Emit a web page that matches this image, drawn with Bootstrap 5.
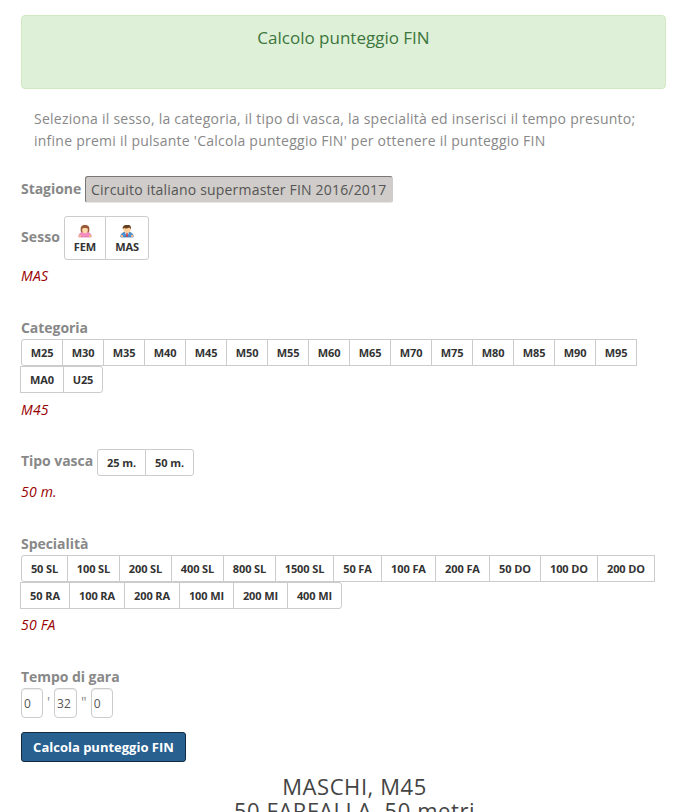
<!DOCTYPE html>
<html lang="it">
<head>
<meta charset="utf-8">
<meta name="viewport" content="width=device-width, initial-scale=1">
<title>Calcolo punteggio FIN</title>
<link href="https://cdn.jsdelivr.net/npm/bootstrap@5.3.0/dist/css/bootstrap.min.css" rel="stylesheet">
<style>
body{font-family:"Open Sans",sans-serif;font-size:14px;line-height:22px;color:#888;background:#fff;height:812px;overflow:hidden}
.page{width:645px;margin:15px 0 0 21px}
.title-box{height:74px;padding:10px 15px;background:#dff0d8;border:1px solid #d0e9c0;border-radius:4px;color:#3c763d;margin-bottom:19px;font-size:17px;line-height:23px}
.intro{padding:0 13px;height:44px;margin-bottom:24px;white-space:nowrap;letter-spacing:.248px}
.lbl{font-weight:700;line-height:22px;height:22px;white-space:nowrap;letter-spacing:-.05px}
.lbl-stagione{width:60px;margin-top:2px}
.lbl-sesso{width:39px;margin-top:10px;letter-spacing:.1px}
.lbl-vasca{width:72px;margin-top:1px}
.season{margin-left:4px;width:308px;height:27px;padding:0 5px;background:#d0ccc9;color:#555;border:1px solid;border-color:#777 #d0ccc9 #e8e5e3 #777;border-radius:3px;line-height:26px;white-space:nowrap;letter-spacing:.19px}
.group .btn{--bs-btn-color:#333;--bs-btn-border-color:#ccc;--bs-btn-bg:#fff;--bs-btn-hover-bg:#eee;--bs-btn-hover-border-color:#ccc;font-size:11px;font-weight:700;line-height:17px;letter-spacing:-.1px;padding:4px 0;height:27px;border-radius:0;margin-left:-1px;white-space:nowrap}
.group .btn:first-child{margin-left:0;border-radius:3px 0 0 3px}
.group .btn:last-child{border-radius:0 3px 3px 0}
.group.sex .btn{height:44px;padding-top:6px;line-height:16px}
.sex svg{display:block;margin:0 auto}
.group{margin-left:4px}
.wrapped{margin-left:0}
.w40{width:40px}.w42{width:42px}.w44{width:44px}.w47{width:47px}.w49{width:49px}.w50{width:50px}.w52{width:52px}.w53{width:53px}.w55{width:55px}.w56{width:56px}.w58{width:58px}.w59{width:59px}
.choice{color:#900;font-style:italic;height:22px;letter-spacing:.2px}
.time{width:22px;height:30px;border:1px solid #ccc;border-radius:4px;padding:0 2px;color:#555;font-size:12px;box-shadow:inset 0 1px 1px rgba(0,0,0,.075)}
.tick{padding:3px 4px 0}
.btn.go{--bs-btn-color:#fff;--bs-btn-bg:#286090;--bs-btn-border-color:#122b40;--bs-btn-hover-bg:#204d74;font-size:13px;font-weight:700;line-height:20px;padding:4px 0;width:165px;height:30px;border-radius:3px}
.result{font-size:22px;line-height:24px;letter-spacing:.57px;color:#444;margin:12px 0 0 22px}
</style>
<script src="https://cdn.jsdelivr.net/npm/bootstrap@5.3.0/dist/js/bootstrap.bundle.min.js"></script>
</head>
<body>
<main class="page">
<div class="title-box text-center">Calcolo punteggio FIN</div>
<p class="intro">Seleziona il sesso, la categoria, il tipo di vasca, la specialità ed inserisci il tempo presunto;<br>infine premi il pulsante 'Calcola punteggio FIN' per ottenere il punteggio FIN</p>

<div class="d-flex" style="margin-bottom:13px"><div class="lbl lbl-stagione">Stagione</div><div class="season">Circuito italiano supermaster FIN 2016/2017</div></div>

<div class="d-flex" style="margin-bottom:5px"><div class="lbl lbl-sesso">Sesso</div>
<div class="group sex d-flex">
<button class="btn w42" type="button"><svg width="14" height="16" viewBox="0 0 14 16"><path d="M3 9.500C2 4 3 2 7 2S12 4 11 9.500Z" fill="#9a5a35"/><path d="M.8 14C.8 10.500 3 9 7 9s6.200 1.500 6.200 5Z" fill="#f48cc0" stroke="#d5709f" stroke-width=".7"/><path d="M4.200 6C5 4.800 9 4.800 9.800 6c.2 3-.8 4.300-2.800 4.300S4 9 4.200 6Z" fill="#ffdcae"/><path d="M1 12h2v2H1zM11 12h2v2h-2z" fill="#f2b583"/></svg>FEM</button>
<button class="btn w44" type="button"><svg width="14" height="16" viewBox="0 0 14 16"><path d="M.8 14C.8 10.500 3 9 7 9s6.200 1.500 6.200 5Z" fill="#4c93d4" stroke="#3269a5" stroke-width=".7"/><path d="M5 9.500h4l-2 4z" fill="#fff"/><path d="M6.400 10h1.200L8 13.500H6z" fill="#c33"/><ellipse cx="7" cy="6.300" rx="3.500" ry="3.800" fill="#ffd09b"/><path d="M3 6.500C2 3 4 1.500 8 2c3 0 3 2 3 4.500L9.500 4.500Q5 6.500 4 4.500Z" fill="#65401e"/><path d="M1 12h2v2H1zM11 12h2v2h-2z" fill="#f2b583"/></svg>MAS</button>
</div></div>
<div class="choice">MAS</div>

<div class="lbl" style="margin-top:30px">Categoria</div>
<div class="group wrapped d-flex flex-wrap">
<button class="btn w42">M25</button><button class="btn w42">M30</button><button class="btn w42">M35</button><button class="btn w42">M40</button><button class="btn w42">M45</button><button class="btn w42">M50</button><button class="btn w42">M55</button><button class="btn w42">M60</button><button class="btn w42">M65</button><button class="btn w42">M70</button><button class="btn w42">M75</button><button class="btn w42">M80</button><button class="btn w42">M85</button><button class="btn w42">M90</button><button class="btn w42">M95</button><button class="btn w44">MA0</button><button class="btn w40">U25</button>
</div>
<div class="choice" style="margin-top:6px">M45</div>

<div class="d-flex" style="margin-top:28px"><div class="lbl lbl-vasca">Tipo vasca</div><div class="group d-flex"><button class="btn w49">25 m.</button><button class="btn w49">50 m.</button></div></div>
<div class="choice" style="margin-top:5px">50 m.</div>

<div class="lbl" style="margin-top:30px">Specialità</div>
<div class="group wrapped d-flex flex-wrap">
<button class="btn w47">50 SL</button><button class="btn w53">100 SL</button><button class="btn w53">200 SL</button><button class="btn w53">400 SL</button><button class="btn w53">800 SL</button><button class="btn w59">1500 SL</button><button class="btn w49">50 FA</button><button class="btn w55">100 FA</button><button class="btn w55">200 FA</button><button class="btn w52">50 DO</button><button class="btn w58">100 DO</button><button class="btn w58">200 DO</button><button class="btn w50">50 RA</button><button class="btn w56">100 RA</button><button class="btn w56">200 RA</button><button class="btn w55">100 MI</button><button class="btn w55">200 MI</button><button class="btn w55">400 MI</button>
</div>
<div class="choice" style="margin-top:5px">50 FA</div>

<div class="lbl" style="margin-top:30px">Tempo di gara</div>
<div class="d-flex"><input class="time" value="0"><span class="tick">'</span><input class="time" style="width:23px" value="32"><span class="tick">"</span><input class="time" value="0"></div>
<button class="btn go" type="button" style="margin-top:14px">Calcola punteggio FIN</button>
<div class="result text-center">MASCHI, M45<br>50 FARFALLA, 50 metri</div>
</main>
</body>
</html>
